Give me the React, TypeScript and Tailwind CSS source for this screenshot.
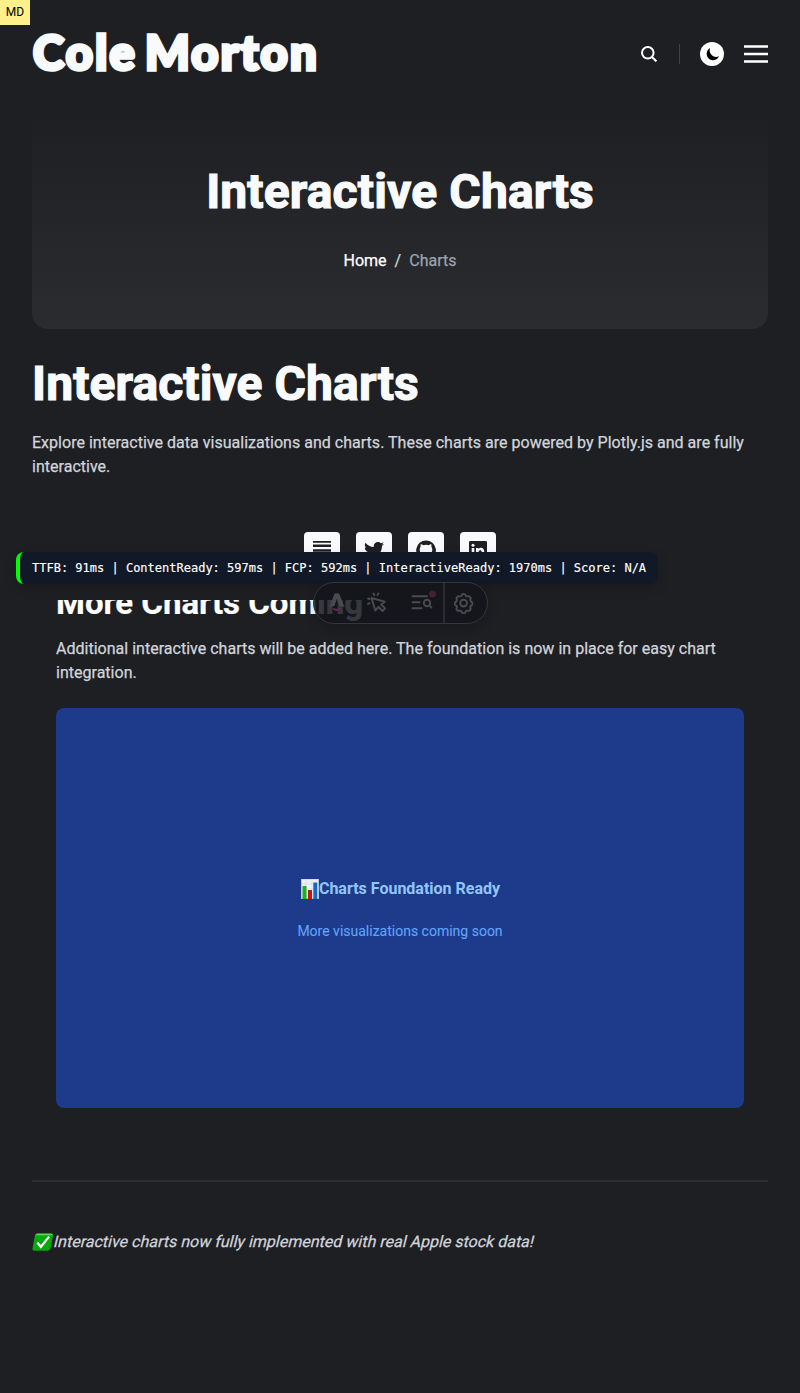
import React from "react";
import { FaTwitter } from "react-icons/fa";

const LogoText = () => (
  <a className="block -translate-y-[2.500px] whitespace-nowrap pl-px font-['Lato'] text-[47px] leading-[48px] font-black tracking-[2.300px] text-[#f9fafb] [-webkit-text-stroke:3.600px_#f9fafb] [word-spacing:-5.500px]">
    Cole Morton
  </a>
);

const SearchIcon = () => (
  <svg className="h-4 w-4" viewBox="0 0 16 16" fill="none" stroke="#fff" strokeWidth="2">
    <circle cx="6.8" cy="6.8" r="5.8" />
    <path d="M11 11l4.4 4.4" />
  </svg>
);

const MoonButton = () => (
  <div className="flex h-6 w-6 items-center justify-center rounded-full bg-white">
    <svg className="h-[15px] w-[15px]" viewBox="0 0 15 15">
      <path d="M5.2 1.1A6.4 6.4 0 1 0 14 9.2 6.4 6.4 0 0 1 5.2 1.1Z" fill="#000" />
    </svg>
  </div>
);

const ShareTile = ({ children }: { children: React.ReactNode }) => (
  <a className="flex h-9 w-9 items-center justify-center rounded bg-[#f9fafb] text-[#1d1f23]">{children}</a>
);

const ChartEmoji = () => (
  <svg className="h-5 w-[19px]" viewBox="0 0 19 20">
    <rect x="1" y="0" width="18" height="20" fill="#b9c8d0" />
    <rect x="2" y="0.5" width="16" height="18.5" fill="#edf2f6" />
    <path d="M2 5h16M2 10h16M2 15h16M6 1v18M12 1v18" stroke="#ccd6df" strokeWidth=".6" />
    <rect x="2.5" y="7" width="4" height="13" fill="#16b51c" />
    <rect x="8" y="11" width="4" height="9" fill="#c3161c" />
    <rect x="13.3" y="3.5" width="4" height="16.5" fill="#1768c5" />
  </svg>
);

const CheckEmoji = () => (
  <svg className="h-5 w-[21.500px] shrink-0" viewBox="0 0 22 20">
    <path d="M6 1h13q3 0 2.5 2.5L19 16.500q-.6 2.500-3 2.500H2.500Q0 19 .5 16.500L3 3.500Q3.500 1 6 1Z" fill="#08a80b" />
    <path d="M6 1.500h13q2 0 2 1.500H3.500Q4 1.500 6 1.500Z" fill="#65cf65" />
    <path d="M5.500 10.500L9 15l8.500-10.500" stroke="#fff" strokeWidth="2.300" fill="none" />
  </svg>
);

const MetricsBar = () => (
  <div className="absolute top-[552px] left-4 z-20 flex h-8 w-[642px] items-center rounded-lg border-l-4 border-[#00ff00] bg-[#111827] pl-3 font-['DejaVu_Sans_Mono',monospace] text-[12px] whitespace-pre text-white shadow-[0_4px_12px_rgba(0,0,0,0.15)] [-webkit-text-stroke:0.15px_currentColor]">
    TTFB: 91ms | ContentReady: 597ms | FCP: 592ms | InteractiveReady: 1970ms | Score: N/A
  </div>
);

const DevToolbar = () => (
  <div className="absolute top-[582px] left-[313px] z-30 flex h-[42px] w-[174.500px] overflow-hidden rounded-full border border-[#34363d] bg-[#14151a]/85 shadow-[0_4px_12px_rgba(0,0,0,0.2)]">
    <svg className="h-10 w-[173px] shrink-0" viewBox="314 583 173 40" fill="none" stroke="#4a4b50" strokeWidth="1.900" strokeLinecap="round" strokeLinejoin="round">
      <path d="M329.500 607L334.500 593.500H339L344.500 607L339.500 605.800L337 598.500L334.500 605.800Z" fill="#4a4b50" stroke="none" />
      <path d="M332 607.500q5 2.500 9 0q-1 3-4.500 3.500q-3.500-.5-4.500-3.500Z" fill="#68265c" stroke="none" />
      <path d="M371.500 598l3.800 12.500 3.200-3.500 4 4 2.600-2.600-4-4 3.600-2.700Z" />
      <path d="M373.500 593.500l.8 1.500M378.500 593.500l-1 1.500M368 598.500l1.500.5M368 604l1.500-.8" />
      <path d="M412.500 596.200h14.500M412.500 602.200h7M412.500 608.200h9" />
      <circle cx="427" cy="603" r="3.200" />
      <path d="M429.400 605.400l2 2.200" />
      <circle cx="432.500" cy="594" r="3.600" fill="#45202d" stroke="none" />
      <path d="M444 583v40" stroke="#292b31" strokeWidth="2" />
      <path d="M461.300 596l1-1.700q1.300-.5 2.600 0l1 1.700q.6.300 1.200.4l2-.2q1.200.8 1.700 1.900l-.6 1.900q.2.600.5 1.200l1.500 1.300q.3 1.200 0 2.200l-1.500 1.300q-.3.500-.5 1.100l.6 1.900q-.6 1.200-1.700 1.900l-2-.2q-.6.200-1.200.5l-1 1.700q-1.300.4-2.600 0l-1-1.700q-.6-.3-1.200-.5l-2 .2q-1.200-.8-1.700-1.900l.6-1.900q-.2-.6-.5-1.100l-1.500-1.300q-.3-1.100 0-2.200l1.500-1.300q.2-.6.5-1.200l-.6-1.900q.6-1.200 1.700-1.900l2 .2q.6-.1 1.200-.4Z" />
      <circle cx="463.600" cy="603.100" r="3.400" />
    </svg>
  </div>
);

export default function App() {
  return (
    <div className="relative h-[1393px] w-[800px] overflow-hidden bg-[#1e1f23] px-8 font-['Roboto',sans-serif] text-base text-[#d1d5db] [-webkit-text-stroke:0.25px_currentColor]">
      <div className="absolute top-0 left-0 flex h-[24.500px] w-[30px] items-center justify-center bg-[#fef08a] text-[12px] text-black [-webkit-text-stroke:0px]">MD</div>

      <header className="flex h-[108px] items-center justify-between">
        <LogoText />
        <div className="flex items-center">
          <SearchIcon />
          <div className="ml-[22px] h-5 w-px bg-[#414247]" />
          <div className="ml-5"><MoonButton /></div>
          <svg className="ml-5 h-[18px] w-6" viewBox="0 0 24 18">
            <path d="M0 1.500h24M0 9h24M0 16.500h24" stroke="#fff" strokeWidth="2.400" />
          </svg>
        </div>
      </header>

      <section className="flex h-[221px] flex-col items-center rounded-2xl bg-linear-to-b from-[#1e1f23] to-[#2b2c30] pt-[54px]">
        <h1 className="text-[48px] leading-[60px] font-bold tracking-[0.150px] text-[#f9fafb] [-webkit-text-stroke:1.200px_currentColor]">Interactive Charts</h1>
        <nav className="mt-[27px] flex gap-2 leading-6">
          <span className="text-white">Home</span>
          <span>/</span>
          <span className="text-[#9ca3af]">Charts</span>
        </nav>
      </section>

      <h1 className="mt-[25px] text-[48px] leading-[60px] font-bold tracking-[0.100px] text-[#f9fafb] [-webkit-text-stroke:1.200px_currentColor]">Interactive Charts</h1>
      <p className="mt-[17px] leading-6 tracking-[0.020px]">
        Explore interactive data visualizations and charts. These charts are powered by Plotly.js and are fully interactive.
      </p>

      <div className="mt-[53px] flex h-9 justify-center gap-4">
        <ShareTile>
          <svg className="h-[18px] w-[18px]" viewBox="0 0 18 18" stroke="#1d1f23" strokeWidth="2.400">
            <path d="M0 .5h18M0 4.800h18M0 9.500h18M0 14h18" />
          </svg>
        </ShareTile>
        <ShareTile><FaTwitter className="h-5 w-5" /></ShareTile>
        <ShareTile>
          <svg className="h-5 w-5" viewBox="0 0 20 20" fill="currentColor">
            <path d="M10 .5a9.800 9.800 0 0 0-3.100 19.100c.5.100.7-.2.700-.5v-2c-2.800.6-3.400-1.200-3.400-1.200-.4-1.100-1.100-1.400-1.100-1.400-.9-.6.100-.6.100-.6 1 .1 1.500 1 1.500 1 .9 1.500 2.300 1.100 2.900.8.100-.6.300-1.100.6-1.300-2.200-.3-4.500-1.100-4.500-4.900 0-1.100.4-2 1-2.700-.1-.2-.4-1.200.1-2.600 0 0 .8-.3 2.700 1a9 9 0 0 1 5 0c1.900-1.300 2.700-1 2.700-1 .5 1.400.2 2.400.1 2.600.6.700 1 1.600 1 2.700 0 3.800-2.300 4.600-4.500 4.900.4.300.7.900.7 1.800v2.900c0 .3.200.6.700.5A9.800 9.800 0 0 0 10 .5Z" />
          </svg>
        </ShareTile>
        <ShareTile>
          <svg className="h-[18px] w-[18px]" viewBox="0 0 18 18">
            <rect width="18" height="18" rx="1.300" fill="#1d1f23" />
            <path d="M2.700 7h2.600v8.300H2.700ZM7 7h2.500v1.100c1.500-2.200 5.800-1.700 5.800 2.600v4.600h-2.600v-4.100c0-2.700-3.100-2.500-3.100 0v4.100H7Z" fill="#f9fafb" />
            <circle cx="4" cy="4.200" r="1.500" fill="#f9fafb" />
          </svg>
        </ShareTile>
      </div>

      <section className="mt-8 h-[508.500px] overflow-hidden px-6">
        <h2 className="-mt-[17px] text-[33px] leading-10 font-bold text-white [-webkit-text-stroke:0.200px_currentColor]">More Charts Coming</h2>
        <p className="mt-[13.500px] leading-6 tracking-[0.015px]">
          Additional interactive charts will be added here. The foundation is now in place for easy chart integration.
        </p>
        <div className="mt-[23.500px] flex h-[400px] flex-col items-center justify-center rounded-lg bg-[#1e3a8a]">
          <div className="mt-0.5 flex h-6 items-center font-bold text-[#93c5fd] [-webkit-text-stroke:0px]">
            <ChartEmoji /><span>Charts Foundation Ready</span>
          </div>
          <p className="mt-5 text-sm leading-5 text-[#60a5fa] [-webkit-text-stroke:0.1px_currentColor]">More visualizations coming soon</p>
        </div>
      </section>

      <div className="mt-[71.500px] h-0.5 bg-[#2d2e32]" />
      <div className="mt-12 flex h-6 items-center">
        <CheckEmoji />
        <em className="inline-block -skew-x-[14deg] not-italic">Interactive charts now fully implemented with real Apple stock data!</em>
      </div>

      <MetricsBar />
      <DevToolbar />
    </div>
  );
}
